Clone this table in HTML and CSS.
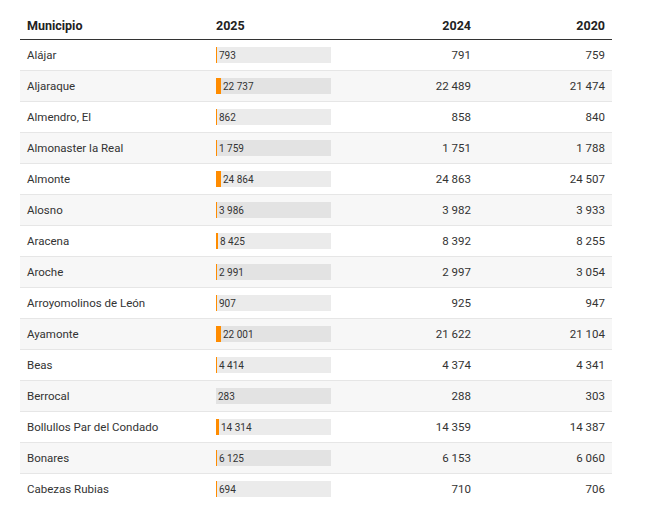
FILE: index.html
```html
<!DOCTYPE html>
<html lang="es">
<head>
<meta charset="utf-8">
<link rel="stylesheet" href="styles.css">
</head>
<body>
<div class="wrap">
<table class="tbl">
<thead>
<tr><th class="c1">Municipio</th><th class="c2">2025</th><th class="c3 num">2024</th><th class="c4 num">2020</th></tr>
</thead>
<tbody>
<tr><td>Alájar</td><td><div class="bar"><span class="fill" style="width:1px"></span><span class="bv">793</span></div></td><td class="num">791</td><td class="num">759</td></tr>
<tr><td>Aljaraque</td><td><div class="bar"><span class="fill" style="width:5px"></span><span class="bv">22 737</span></div></td><td class="num">22 489</td><td class="num">21 474</td></tr>
<tr><td>Almendro, El</td><td><div class="bar"><span class="fill" style="width:1px"></span><span class="bv">862</span></div></td><td class="num">858</td><td class="num">840</td></tr>
<tr><td>Almonaster la Real</td><td><div class="bar"><span class="fill" style="width:1px"></span><span class="bv">1 759</span></div></td><td class="num">1 751</td><td class="num">1 788</td></tr>
<tr><td>Almonte</td><td><div class="bar"><span class="fill" style="width:5px"></span><span class="bv">24 864</span></div></td><td class="num">24 863</td><td class="num">24 507</td></tr>
<tr><td>Alosno</td><td><div class="bar"><span class="fill" style="width:1px"></span><span class="bv">3 986</span></div></td><td class="num">3 982</td><td class="num">3 933</td></tr>
<tr><td>Aracena</td><td><div class="bar"><span class="fill" style="width:2px"></span><span class="bv">8 425</span></div></td><td class="num">8 392</td><td class="num">8 255</td></tr>
<tr><td>Aroche</td><td><div class="bar"><span class="fill" style="width:1px"></span><span class="bv">2 991</span></div></td><td class="num">2 997</td><td class="num">3 054</td></tr>
<tr><td>Arroyomolinos de León</td><td><div class="bar"><span class="fill" style="width:1px"></span><span class="bv">907</span></div></td><td class="num">925</td><td class="num">947</td></tr>
<tr><td>Ayamonte</td><td><div class="bar"><span class="fill" style="width:5px"></span><span class="bv">22 001</span></div></td><td class="num">21 622</td><td class="num">21 104</td></tr>
<tr><td>Beas</td><td><div class="bar"><span class="fill" style="width:1px"></span><span class="bv">4 414</span></div></td><td class="num">4 374</td><td class="num">4 341</td></tr>
<tr><td>Berrocal</td><td><div class="bar"><span class="fill" style="width:0px"></span><span class="bv">283</span></div></td><td class="num">288</td><td class="num">303</td></tr>
<tr><td>Bollullos Par del Condado</td><td><div class="bar"><span class="fill" style="width:3px"></span><span class="bv">14 314</span></div></td><td class="num">14 359</td><td class="num">14 387</td></tr>
<tr><td>Bonares</td><td><div class="bar"><span class="fill" style="width:1px"></span><span class="bv">6 125</span></div></td><td class="num">6 153</td><td class="num">6 060</td></tr>
<tr><td>Cabezas Rubias</td><td><div class="bar"><span class="fill" style="width:1px"></span><span class="bv">694</span></div></td><td class="num">710</td><td class="num">706</td></tr>
</tbody>
</table>
</div>
</body>
</html>
```
FILE: styles.css
```css
html, body {
  margin: 0;
  padding: 0;
  background: #fff;
}
body {
  font-family: Roboto, "Liberation Sans", Arial, sans-serif;
  color: #333;
}
.wrap {
  padding: 11px 0 0 20px;
}
.tbl {
  width: 592px;
  border-collapse: collapse;
  table-layout: fixed;
}
.tbl th {
  font-size: 12.5px;
  font-weight: 700;
  color: #222;
  text-align: left;
  height: 27px;
  padding: 1px 7px 0;
  border-bottom: 1px solid #333;
  vertical-align: middle;
}
.tbl .c1 { width: 175px; }
.tbl .c2 { width: 117px; }
.tbl .c3 { width: 124px; }
.tbl .c4 { width: 120px; }
.tbl td {
  font-size: 11.5px;
  height: 30px;
  padding: 0 7px;
  border-bottom: 1px solid #e6e6e6;
  vertical-align: middle;
}
.tbl tbody tr:last-child td {
  border-bottom: none;
}
.tbl tbody tr:nth-child(even) td {
  background: #f7f7f7;
}
.tbl .num {
  text-align: right;
}
.bar {
  display: flex;
  align-items: center;
  width: 115px;
  height: 16px;
  background: rgba(0, 0, 0, 0.08);
}
.fill {
  display: block;
  height: 16px;
  background: #ff8c00;
  flex: none;
}
.bv {
  font-size: 10px;
  color: #333;
  padding-left: 2px;
}
```
